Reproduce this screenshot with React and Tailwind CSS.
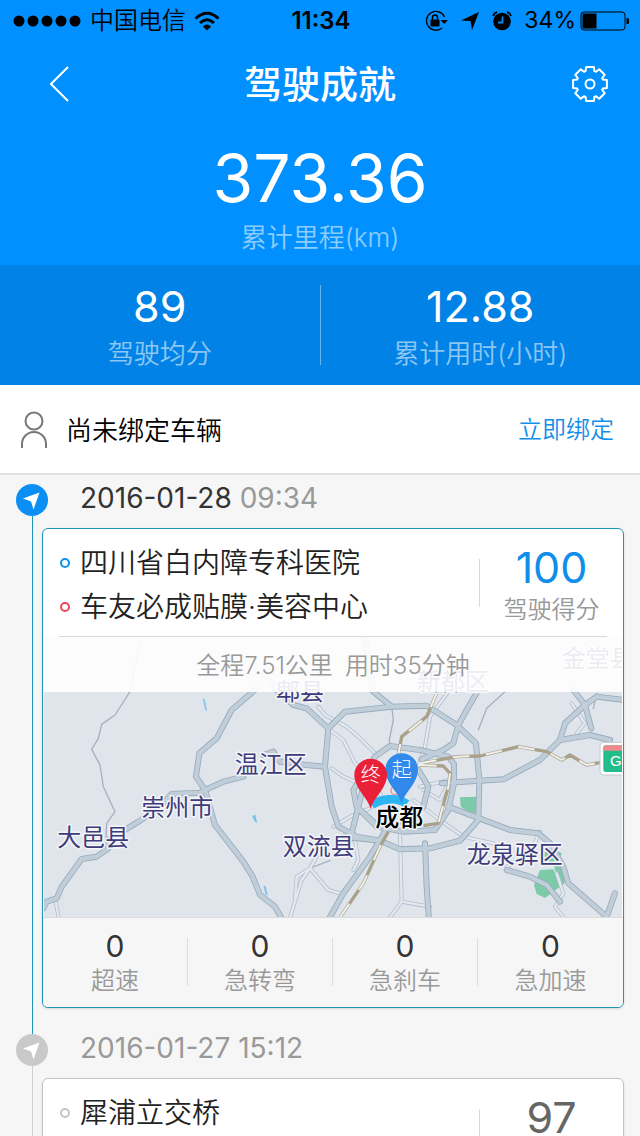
import React from 'react';

const trips = [
  {
    id: 1,
    date: '2016-01-28',
    time: '09:34',
    from: '四川省白内障专科医院',
    to: '车友必成贴膜·美容中心',
    score: 100,
    distance: '全程7.51公里',
    duration: '用时35分钟',
    events: [
      { label: '超速', count: 0 },
      { label: '急转弯', count: 0 },
      { label: '急刹车', count: 0 },
      { label: '急加速', count: 0 },
    ],
  },
  {
    id: 2,
    date: '2016-01-27',
    time: '15:12',
    from: '犀浦立交桥',
    score: 97,
  },
];

// Map geometry, three units to a pixel
const thinRoads = [
  'M330 0 L300 155 L255 225 L215 253 L205 295 L185 328 L210 375 L220 440 L255 515 L230 550 L228 600',
  'M1425 155 L1370 205 L1345 270',
  'M1085 200 L1090 240 L1078 300 L1080 320',
  'M795 775 L825 690 L900 662',
  'M1700 160 L1690 205',
];

const localRoads = [
  'M865 200 L885 225 L950 260 L985 290 L1040 345',
  'M900 270 L940 300 L975 370 L1010 400',
  'M905 385 L940 410 L975 425',
  'M1255 155 L1200 230 L1185 320 L1165 380',
  'M1110 580 L1115 785 L1080 832',
  'M1115 785 L1200 800',
  'M780 832 L815 720 L840 685 L862 645',
  'M795 775 L800 710 L840 685 L895 750 L930 760',
  'M76 780 L86 832',
  'M910 560 L960 530 L1020 505',
  'M975 600 L985 660 L970 690',
  'M1150 480 L1230 540 L1300 590 L1390 610',
  'M1170 440 L1260 420 L1230 480 L1180 450',
  'M1000 420 L1040 440 L1060 480',
  'M1095 400 L1120 440 L1110 470',
  'M1625 190 L1665 250 L1640 280',
  'M1530 575 L1500 640 L1430 680',
  'M1580 700 L1600 760 L1575 800 L1600 830',
];

const highways = [
  'M40 805 L50 785 L80 775 L95 740 L155 657 L200 650 L235 625 L235 600 L285 570 L325 545 L385 505 L425 462 L510 458 L525 450 L580 425 L640 410',
  'M680 145 L605 210 L560 295 L508 340 L498 410 L525 450 L555 555 L640 665 L668 710 L690 765 L735 800 L758 840',
  'M700 345 L730 335 L750 365 L830 375 L885 380',
  'M700 100 L740 150 L790 195 L830 205 L895 265',
  'M895 265 L885 380 L905 500 L925 560 L980 590 L1050 602 L1110 628 L1200 625 L1290 602 L1345 540 L1348 420 L1338 310 L1280 255 L1190 197 L1085 200 L945 215 L895 265',
  'M1005 0 L1030 155 L1085 200',
  'M1345 150 L1310 210 L1285 255 L1270 310 L1240 330 L1175 358',
  'M960 600 L1010 400 L1035 350 L1080 318 L1170 330 L1255 350 L1272 372 L1272 430 L1255 510 L1215 570 L1120 575 L1040 560 L990 510',
  'M1235 430 L1348 422 L1420 418 L1530 360 L1590 300 L1605 250 L1665 195 L1700 170 L1785 180',
  'M1590 300 L1680 285 L1740 300',
  'M1630 150 L1665 195 L1684 265',
  'M1255 500 L1348 535 L1440 570 L1525 580 L1560 610 L1600 680 L1615 730 L1730 830 L1755 760',
  'M1430 690 L1500 710 L1550 735 L1590 785',
  'M1185 610 L1190 740 L1197 840',
  'M895 840 L940 760 L1020 650 L1065 575',
  'M940 590 L1050 602',
  'M1000 400 L970 450 L980 500 L1040 555',
  'M1165 390 L1195 440 L1180 500 L1120 550',
];

const railways = [
  'M930 832 L1000 730 L1050 620 L1075 575',
  'M1222 155 L1190 230 L1115 290 L1105 345',
  'M1170 370 L1280 350 L1350 348 L1465 320 L1550 335 L1595 360 L1620 345 L1670 375 L1710 368',
  'M1170 375 L1240 378 L1260 400 L1255 440 L1225 550 L1180 557',
];

const places = [
  { name: '大邑县', x: 190, y: 618 },
  { name: '崇州市', x: 442, y: 528 },
  { name: '温江区', x: 722, y: 400 },
  { name: '双流县', x: 866, y: 646 },
  { name: '郫县', x: 810, y: 181 },
  { name: '新都区', x: 1268, y: 149 },
  { name: '金堂县', x: 1703, y: 80 },
  { name: '龙泉驿区', x: 1454, y: 670 },
];

const Pin = ({ x, y, color, label }) => (
  <g transform={`translate(${x} ${y})`}>
    <path d="M0 102 C-8 68 -49 40 -49 0 A49 49 0 0 1 49 0 C49 40 8 68 0 102 Z" fill={color} />
    <text
      y="22"
      textAnchor="middle"
      className="fill-white text-[60px] font-light"
    >
      {label}
    </text>
  </g>
);

const TripMap = () => (
  <svg viewBox="42 -9 1734 840" className="block w-full" role="img" aria-label="行程地图">
    <rect x="42" y="-9" width="1734" height="840" fill="#e0e5ec" />
    <g fill="#7ccaa8">
      <path d="M1290 472 L1338 470 L1338 520 L1320 520 L1292 500 Z" />
      <path d="M1512 735 L1530 690 L1570 688 L1590 740 L1545 774 L1520 762 Z" />
      <path d="M1572 680 L1595 670 L1610 710 L1600 735 L1585 720 Z" />
      <path d="M1530 640 L1570 628 L1595 640 L1585 670 L1540 670 Z" />
    </g>
    <g fill="#7cc4ee">
      <path d="M518 175 L524 178 L531 213 L526 210 Z" />
      <path d="M666 528 L676 524 L682 550 L674 544 Z" />
      <path d="M700 735 L708 740 L713 768 L706 762 Z" />
    </g>
    <g fill="none" strokeLinejoin="round" strokeLinecap="round">
      {thinRoads.map((d) => <path key={d} d={d} stroke="#a3b1c1" strokeWidth="4" />)}
      {localRoads.map((d) => <path key={d} d={d} stroke="#b3bfd0" strokeWidth="12" />)}
      {localRoads.map((d) => <path key={d} d={d} stroke="#e4e9f0" strokeWidth="7" />)}
      {highways.map((d) => <path key={d} d={d} stroke="#98aabb" strokeWidth="18" />)}
      {highways.map((d) => <path key={d} d={d} stroke="#bfced9" strokeWidth="13" />)}
    </g>
    <g fill="none" strokeLinejoin="round">
      {railways.map((d) => <path key={d} d={d} stroke="#aaa18b" strokeWidth="10" />)}
      {railways.map((d) => (
        <path key={d} d={d} stroke="#f1f0ec" strokeWidth="6" strokeDasharray="50 50" />
      ))}
      <circle cx="1095" cy="452" r="12" stroke="#ee8b8b" strokeWidth="4" />
      <path d="M1025 495 C1050 478 1100 468 1130 492" stroke="#2bb5f3" strokeWidth="26" />
    </g>

    {/* Road shield */}
    <rect x="1710" y="307" width="90" height="98" rx="10" fill="#fdfdfd" stroke="#c4cad2" strokeWidth="3" />
    <rect x="1720" y="316" width="90" height="80" rx="8" fill="#22bd8a" />
    <path d="M1720 332 V324 Q1720 316 1728 316 H1800 V332 Z" fill="#f08a8c" />
    <text x="1740" y="379" className="fill-white font-['Liberation_Sans'] text-[45px]">G</text>

    <g
      textAnchor="middle"
      fill="#3e3b7b"
      stroke="#f3f5f8"
      strokeWidth="9"
      strokeLinejoin="round"
      paintOrder="stroke"
      className="text-[72px] font-normal"
    >
      {places.map(({ name, x, y }) => (
        <text key={name} x={x} y={y}>{name}</text>
      ))}
      <text x="1108" y="559" fill="#000" className="font-medium">成都</text>
    </g>

    <Pin x={1115} y={389} color="#3289ec" label="起" />
    <Pin x={1022} y={405} color="#ea2038" label="终" />
  </svg>
);

const StatusBar = () => (
  <div className="grid h-10 grid-cols-[1fr_auto_1fr] items-center pt-px pr-2.5 pl-3 text-black">
    <div className="flex items-center gap-2">
      <svg viewBox="0 0 70 12" className="h-3 w-[70px]">
        {[7, 21, 35, 49, 63].map((cx) => <circle key={cx} cx={cx} cy="6" r="5.5" />)}
      </svg>
      <span className="text-2xl font-[350]">中国电信</span>
      <svg viewBox="0 0 26 20" className="h-5 w-[26px]" fill="none" stroke="currentColor" strokeWidth="3">
        <path d="M1.5 7.5 Q13 -3 24.5 7.5" />
        <path d="M6 12 Q13 5.5 20 12" />
        <path d="M9 15.5 Q13 11.5 17 15.5 L13 19.5 Z" fill="currentColor" stroke="none" />
      </svg>
    </div>
    <span className="text-2xl font-semibold">11:34</span>
    <div className="flex items-center justify-end gap-3">
      <svg viewBox="0 0 24 22" className="h-[22px] w-6">
        <path d="M20.5 7 A9.4 9.4 0 1 0 18 18" fill="none" stroke="currentColor" strokeWidth="1.4" />
        <path d="M16.5 10 H24 L20.3 14 Z" />
        <rect x="6.5" y="9.5" width="9" height="7" rx="1" />
        <path d="M8.5 10 V7.5 A2.5 2.5 0 0 1 13.5 7.5 V10" fill="none" stroke="currentColor" strokeWidth="1.5" />
      </svg>
      <svg viewBox="0 0 20 20" className="size-5">
        <path d="M19 1 L12 19 L10.5 10 L1 9.5 Z" />
      </svg>
      <svg viewBox="0 0 20 20" className="size-5">
        <circle cx="10" cy="10.5" r="8.8" />
        <path d="M1 5 Q2 2 5 1.2 M19 5 Q18 2 15 1.2" fill="none" stroke="currentColor" strokeWidth="1.8" />
        <path d="M10.5 5.5 V11.5 H6" fill="none" stroke="#0090ff" strokeWidth="1.8" />
      </svg>
      <div className="flex items-center gap-1">
        <span className="text-[23px]">34%</span>
        <svg viewBox="0 0 50 20" className="h-5 w-[50px]">
          <rect x="1" y="1" width="44" height="18" rx="3" fill="none" stroke="currentColor" />
          <rect x="2.5" y="2.5" width="14" height="15" />
          <path d="M46.5 7 H47.5 Q49 7 49 8.5 V11.5 Q49 13 47.5 13 H46.5 Z" />
        </svg>
      </div>
    </div>
  </div>
);

const gearPath = (() => {
  const points = [];
  for (let i = 0; i < 8; i++) {
    [[-13, 17.3], [13, 17.3], [19, 13.6], [26, 13.6]].forEach(([deg, r]) => {
      const a = ((i * 45 + deg) * Math.PI) / 180;
      points.push(`${(19 + r * Math.sin(a)).toFixed(1)} ${(19 - r * Math.cos(a)).toFixed(1)}`);
    });
  }
  return `M${points.join(' L')} Z`;
})();

const NavBar = () => (
  <div className="grid h-[88px] grid-cols-[1fr_auto_1fr] items-center px-7 text-white">
    <button type="button" aria-label="返回" className="flex w-16 justify-center">
      <svg viewBox="0 0 20 36" className="h-9 w-5" fill="none" stroke="currentColor" strokeWidth="2">
        <path d="M18 1 L1 18 L18 35" />
      </svg>
    </button>
    <h1 className="text-[38px] leading-none font-medium">驾驶成就</h1>
    <button type="button" aria-label="设置" className="flex w-11 justify-center justify-self-end">
      <svg viewBox="0 0 38 38" className="size-[38px]" fill="none" stroke="currentColor" strokeWidth="2" strokeLinejoin="round">
        <path d={gearPath} />
        <circle cx="19" cy="19" r="4.5" />
      </svg>
    </button>
  </div>
);

const Summary = ({ value, label }) => (
  <div className="flex flex-1 flex-col items-center pt-2.5">
    <span className="text-[43px] leading-[48px]">{value}</span>
    <span className="text-[26px] leading-[48px] font-[350] text-white/55">{label}</span>
  </div>
);

const TripCard = ({ trip, active }) => (
  <div
    className={`min-w-0 overflow-hidden rounded-md border bg-white shadow-sm ${
      active ? 'border-[#1f96b6]' : 'border-[#c4c4c4]'
    }`}
  >
    <div className="flex items-center pl-[17px]">
      <ul className="min-w-0 flex-1 pt-3 pb-[7px] text-[28px] leading-[44px] font-[350] text-[#222]">
        <li className="flex items-center gap-2.5">
          <span className={`size-2.5 rounded-full border-2 ${active ? 'border-[#0c93ec]' : 'border-[#c4c4c4]'}`} />
          {trip.from}
        </li>
        <li className="flex h-11 items-center gap-2.5">
          {trip.to && (
            <>
              <span className="size-2.5 rounded-full border-2 border-[#e8485c]" />
              {trip.to}
            </>
          )}
        </li>
      </ul>
      <div className="h-12 w-px bg-[#d9d9d9]" />
      <div className="flex w-[143px] flex-col items-center pt-2">
        <span className={`text-[43px] leading-[46px] ${active ? 'text-[#118ee9]' : 'text-[#666]'}`}>
          {trip.score}
        </span>
        <span className="text-2xl leading-10 font-[350] text-[#999]">驾驶得分</span>
      </div>
    </div>
    <div className="mx-4 h-px bg-[#d9d9d9]" />

    {trip.events && (
      <>
        <div className="relative mx-px">
          <TripMap />
          <p className="absolute inset-x-0 top-0 flex h-[55px] items-center justify-center gap-3 bg-white/90 pt-0.5 text-2xl font-[350] text-[#999]">
            <span>{trip.distance}</span>
            <span>{trip.duration}</span>
          </p>
        </div>
        <dl className="grid grid-cols-4 divide-x divide-[#dcdcdc] border-t border-[#dcdcdc] bg-[#f6f6f6] pt-5 pb-[21px]">
          {trip.events.map(({ label, count }) => (
            <div key={label} className="flex h-12 flex-col-reverse items-center justify-center pt-1">
              <dt className="text-2xl leading-9 font-[350] text-[#999]">{label}</dt>
              <dd className="text-[30px] leading-[34px] text-[#333]">{count}</dd>
            </div>
          ))}
        </dl>
      </>
    )}
  </div>
);

const Trip = ({ trip, active }) => (
  <li className="flex pr-4">
    <div className="ml-4 flex w-[26px] shrink-0 flex-col">
      <span className={`flex size-8 items-center justify-center rounded-full ${active ? 'bg-[#0c8ff5]' : 'bg-[#c9c9c9]'}`}>
        <svg viewBox="0 0 32 32" className="size-8 fill-white">
          <path d="M23.5 8.5 L17.5 25.5 L15 17.5 L7 14.5 Z" />
        </svg>
      </span>
      <span className={`ml-4 w-px flex-1 ${active ? 'bg-[#1f96b6]' : 'bg-[#d0d0d0]'}`} />
    </div>
    <div className="min-w-0 flex-1 pb-[26px]">
      <p className={`mb-4 pl-[38px] text-[28px] leading-7 ${active ? 'text-[#333]' : 'text-[#999]'}`}>
        {trip.date} <span className="text-[#999]">{trip.time}</span>
      </p>
      <TripCard trip={trip} active={active} />
    </div>
  </li>
);

export default function App() {
  return (
    <div className="flex h-screen flex-col overflow-hidden bg-[#f6f6f6] font-['Inter','Noto_Sans_CJK_SC',sans-serif]">
      <header className="shrink-0 bg-[#0090ff] text-white">
        <StatusBar />
        <NavBar />
        <div className="flex h-[137px] flex-col items-center pt-3">
          <span className="text-[66px] leading-[76px]">373.36</span>
          <span className="text-[26px] leading-[44px] font-[350] text-white/55">累计里程(km)</span>
        </div>
        <div className="flex h-[120px] items-center bg-[#0082e6]">
          <Summary value="89" label="驾驶均分" />
          <div className="h-20 w-px bg-white/40" />
          <Summary value="12.88" label="累计用时(小时)" />
        </div>
      </header>

      <section className="flex h-[90px] shrink-0 items-center border-b-2 border-[#e0e0e0] bg-white pt-0.5 pr-[26px] pl-5">
        <svg viewBox="0 0 28 38" className="h-[38px] w-7" fill="none" stroke="#777" strokeWidth="2">
          <circle cx="14" cy="10" r="8.5" />
          <path d="M2 37 V33 A12 12 0 0 1 26 33 V37" />
        </svg>
        <span className="ml-[18px] flex-1 text-[26px] font-[350] text-black">尚未绑定车辆</span>
        <a href="#bind" className="text-2xl font-[350] text-[#118ee9]">立即绑定</a>
      </section>

      <ul className="min-h-0 flex-1 overflow-y-auto pt-[9px] [scrollbar-width:none]">
        {trips.map((trip, i) => <Trip key={trip.id} trip={trip} active={i === 0} />)}
      </ul>
    </div>
  );
}
